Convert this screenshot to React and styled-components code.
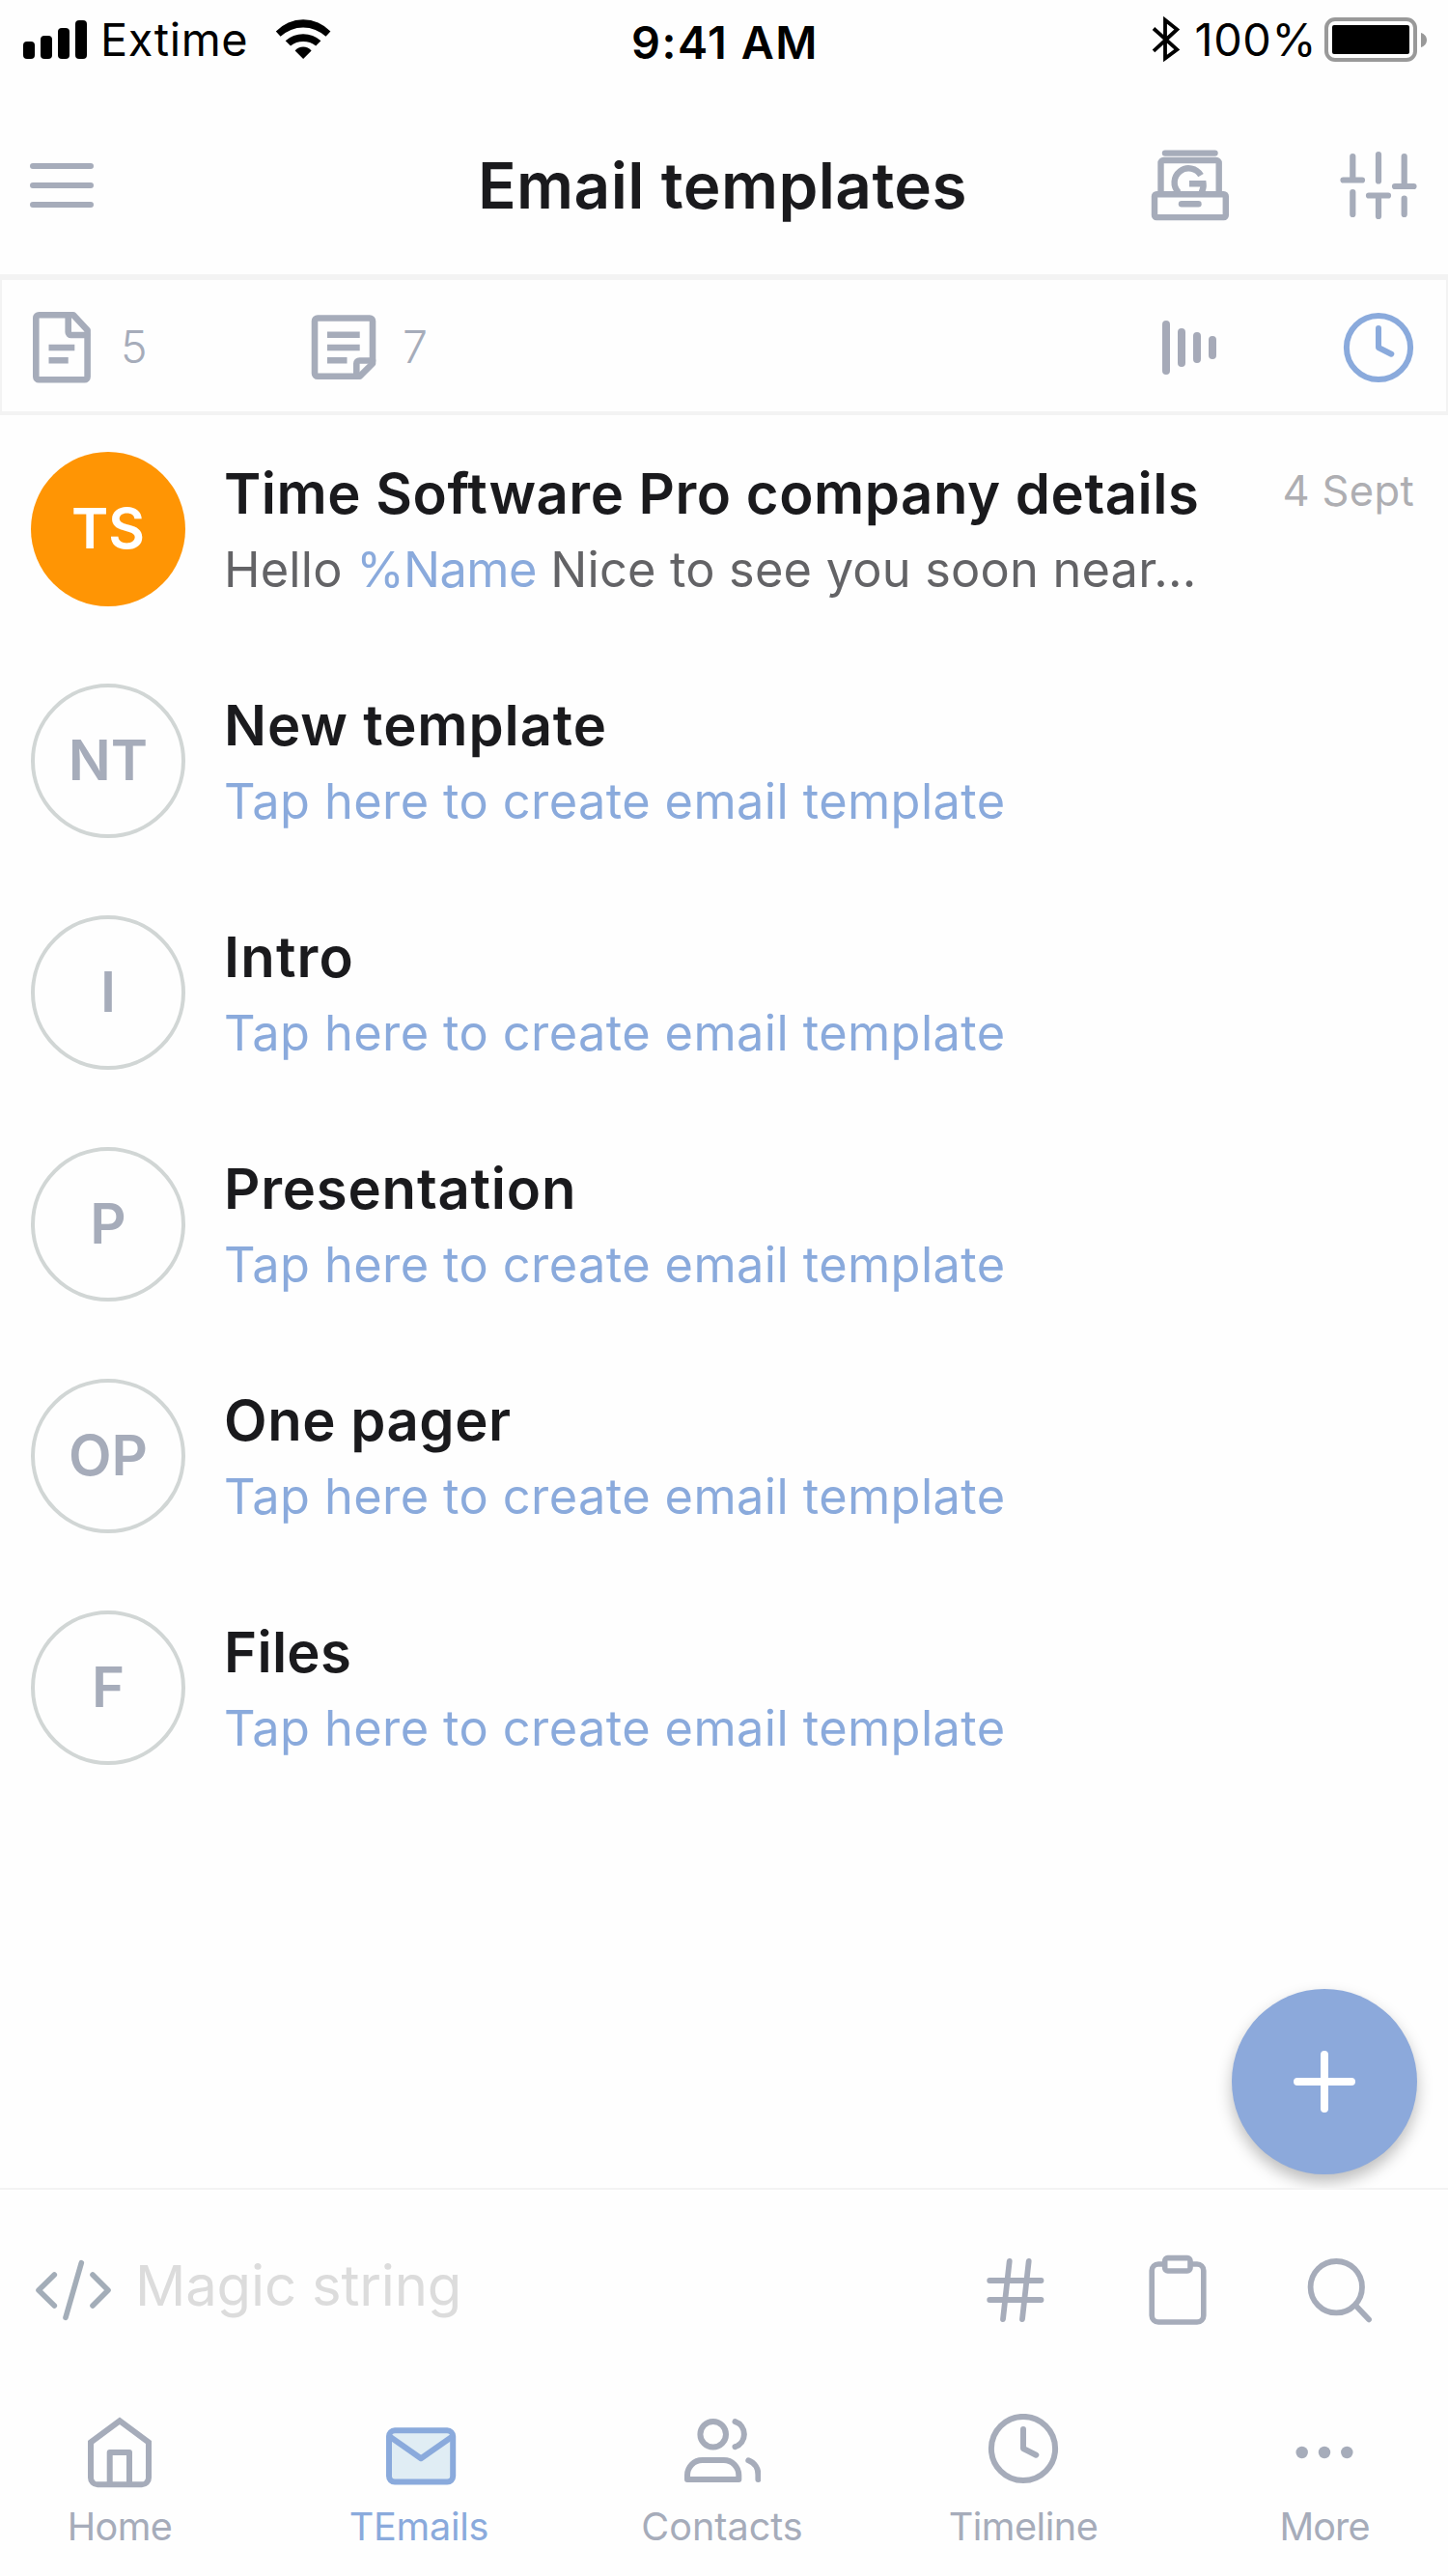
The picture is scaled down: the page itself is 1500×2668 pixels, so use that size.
import React from 'react';
import styled, { createGlobalStyle } from 'styled-components';

const color = {
  page: '#fefefe',
  ink: '#1a1a1d',
  slate: '#a6acba',
  blue: '#8aaadc',
  line: '#f3f3f3',
  body: '#636366',
  date: '#aeaeb2',
  placeholder: '#dcdcdc',
  ring: '#d1d6d5',
  orange: '#ff9504',
};

const GlobalStyle = createGlobalStyle`
  *, *::before, *::after { box-sizing: border-box; }
  body {
    margin: 0;
    background: ${color.page};
    font-family: Inter, "Liberation Sans", sans-serif;
    -webkit-font-smoothing: antialiased;
  }
  svg { display: block; flex: none; }
`;

const Screen = styled.div`
  position: relative;
  display: flex;
  flex-direction: column;
  width: 1500px;
  height: 2668px;
  overflow: hidden;
  background: ${color.page};
`;

/* ---------- Status bar ---------- */

const StatusBar = styled.div`
  display: grid;
  grid-template-columns: 1fr auto 1fr;
  align-items: start;
  height: 100px;
  padding: 0 22px 0 24px;
  color: #000;
  font-size: 46.8px;
  line-height: 82px;
`;

const StatusGroup = styled.div`
  display: flex;
  align-items: center;
  justify-content: ${(p) => (p.$end ? 'flex-end' : 'flex-start')};
  height: 82px;
`;

const Carrier = styled.span`
  margin: 0 28px 0 14px;
  letter-spacing: 0.6px;
`;

const Clock = styled.span`
  padding-top: 3px;
  font-weight: 600;
  letter-spacing: 1.5px;
`;

const Percent = styled.span`
  margin: 0 8px 0 15px;
  letter-spacing: 0.6px;
`;

/* ---------- Header ---------- */

const Header = styled.header`
  display: grid;
  grid-template-columns: 1fr auto 1fr;
  align-items: center;
  height: 188px;
  padding: 0 32px 0 31px;
  border-bottom: 4px solid ${color.line};
`;

const Title = styled.h1`
  margin: -1px 0 0 -2px;
  color: ${color.ink};
  font-size: 65.6px;
  font-weight: 600;
  line-height: 80px;
  letter-spacing: 0.42px;
`;

const HeaderActions = styled.div`
  display: flex;
  align-items: center;
  justify-content: flex-end;
  gap: 114px;
`;

/* ---------- Filter bar ---------- */

const FilterBar = styled.div`
  display: flex;
  align-items: center;
  height: 142px;
  padding: 4px 33px 0 30px;
  border: solid ${color.line};
  border-width: 2px 2px 4px;
`;

const Counter = styled.div`
  display: flex;
  align-items: center;
  width: ${(p) => p.$width}px;
`;

const Count = styled.span`
  margin: -2px 0 0 ${(p) => p.$gap}px;
  color: ${color.slate};
  font-size: 46.5px;
  font-weight: 350;
  line-height: 60px;
`;

const FilterModes = styled.div`
  display: flex;
  align-items: center;
  gap: 131px;
  margin-left: auto;
`;

/* ---------- Template list ---------- */

const List = styled.main`
  display: flex;
  flex: 1;
  flex-direction: column;
  gap: 80px;
  padding: 38px 35px 0 32px;
`;

const TemplateRow = styled.article`
  display: flex;
  height: 160px;
`;

const Avatar = styled.div`
  display: flex;
  flex: none;
  align-items: center;
  justify-content: center;
  width: 160px;
  height: 160px;
  padding-bottom: 2px;
  border: ${(p) => (p.$filled ? 'none' : `4px solid ${color.ring}`)};
  border-radius: 50%;
  background: ${(p) => (p.$filled ? color.orange : 'transparent')};
  color: ${(p) => (p.$filled ? '#fff' : color.slate)};
  font-size: 58px;
  font-weight: 600;
`;

const RowText = styled.div`
  flex: 1;
  min-width: 0;
  padding: 3px 0 0 40px;
  white-space: pre;
`;

const RowTitle = styled.h2`
  margin: 0;
  color: ${color.ink};
  font-size: 58px;
  font-weight: 600;
  line-height: 80px;
  letter-spacing: ${(p) => p.$tracking}px;
`;

const RowSummary = styled.p`
  margin: 0;
  color: ${(p) => (p.$link ? color.blue : color.body)};
  font-size: 50.5px;
  line-height: 77px;
  letter-spacing: ${(p) => (p.$link ? 0.4 : 0.2)}px;
`;

const Token = styled.span`
  color: ${color.blue};
  letter-spacing: -0.6px;
`;

const RowDate = styled.time`
  flex: none;
  color: ${color.date};
  font-size: 43.5px;
  line-height: 80px;
  letter-spacing: 0.35px;
`;

/* ---------- Floating button ---------- */

const AddButton = styled.button`
  position: absolute;
  right: 32px;
  bottom: 416px;
  display: flex;
  align-items: center;
  justify-content: center;
  width: 192px;
  height: 192px;
  padding: 0;
  border: 0;
  border-radius: 50%;
  background: #8ca9db;
  box-shadow: 0 8px 16px rgba(0, 0, 0, 0.26);
`;

/* ---------- Composer ---------- */

const Composer = styled.div`
  position: relative;
  z-index: 1;
  display: flex;
  align-items: center;
  height: 210px;
  padding: 0 79px 0 37px;
  border-top: 2px solid ${color.line};
  background: ${color.page};
`;

const Placeholder = styled.span`
  margin: -10px 0 0 24px;
  color: ${color.placeholder};
  font-size: 58px;
  line-height: 80px;
  letter-spacing: -0.17px;
`;

const ComposerActions = styled.div`
  display: flex;
  align-items: center;
  margin-left: auto;
  gap: 102px;
`;

/* ---------- Tab bar ---------- */

const TabBar = styled.nav`
  display: flex;
  justify-content: space-between;
  height: 192px;
  padding: 24px 28px 0 24px;
`;

const Tab = styled.a`
  display: flex;
  flex-direction: column;
  align-items: center;
  width: 200px;
  color: ${(p) => (p.$active ? color.blue : color.slate)};
`;

const TabLabel = styled.span`
  margin-top: 12px;
  padding-right: ${(p) => (p.$active ? 4 : 0)}px;
  font-size: 39.6px;
  line-height: 50px;
  letter-spacing: ${(p) => p.$tracking}px;
`;

/* ---------- Icons ---------- */

const Icon = ({ box, width = 6, tone = 'currentColor', children }) => {
  const [, , w, h] = box.split(' ');
  return (
    <svg
      width={w}
      height={h}
      viewBox={box}
      fill="none"
      stroke={tone}
      strokeWidth={width}
      strokeLinecap="round"
      strokeLinejoin="round"
    >
      {children}
    </svg>
  );
};

const SignalIcon = () => (
  <svg width="66" height="40" viewBox="0 0 66 40">
    <rect x="0" y="22" width="12" height="18" rx="4" />
    <rect x="18" y="16" width="12" height="24" rx="4" />
    <rect x="36" y="8" width="12" height="32" rx="4" />
    <rect x="54" y="0" width="12" height="40" rx="4" />
  </svg>
);

const WifiIcon = () => (
  <svg width="58" height="42" viewBox="285 19 58 42">
    <path d="M285.8 31.6A38.7 38.7 0 0 1 342.4 31.6L337.5 36.8A34.3 34.3 0 0 0 290.6 36.8Z" />
    <path d="M295.7 41.2A27.4 27.4 0 0 1 332.4 41.2L327.2 46.5A21.8 21.8 0 0 0 301 46.5Z" />
    <path d="M305.6 51.5A11 11 0 0 1 322.6 51.5L314.1 60Z" />
  </svg>
);

const BluetoothIcon = () => (
  <svg width="30" height="48" viewBox="1192 16 30 48" fill="none" stroke="#000" strokeWidth="3.8">
    <path d="M1194 28.5L1218.3 50.3L1206 59.5V19.7L1218.3 29.5L1194 51.8" />
  </svg>
);

const BatteryIcon = () => (
  <svg width="106" height="46" viewBox="0 0 106 46">
    <rect x="2" y="2" width="92" height="42" rx="9" fill="none" stroke="#999" strokeWidth="4" />
    <rect x="8" y="8" width="80" height="30" rx="2" />
    <path d="M100 16C103.500 17 106 20 106 23.500S103.500 30 100 31Z" fill="#999" />
  </svg>
);

const MenuIcon = () => (
  <Icon box="0 0 66 46" tone={color.slate}>
    <path d="M3 3H63M3 23H63M3 43H63" />
  </Icon>
);

const ArchiveIcon = () => (
  <Icon box="1192 155 82 74" tone={color.slate} width={6.4}>
    <path d="M1207 158.600H1258.500" />
    <path d="M1202.500 200V169a3 3 0 0 1 3-3H1259.700a3 3 0 0 1 3 3V200" />
    <rect x="1196" y="201.300" width="73.800" height="23.800" rx="2" />
    <path d="M1224 211.200H1241.500" />
    <path
      d="M1244 181.600A14.700 14.700 0 1 0 1221 199.500M1232 190.200H1246.500C1247 194 1246 197 1244.500 200"
      strokeLinecap="butt"
      strokeLinejoin="miter"
    />
  </Icon>
);

const SlidersIcon = () => (
  <Icon box="1388 156 80 72" tone={color.slate} width={6.2}>
    <path d="M1401.300 162V186.500M1391.500 186.500H1411M1401.300 199V222" />
    <path d="M1428 160V187.500M1418 202.500H1438M1428 202.500V224" />
    <path d="M1454.700 162V193M1445 193H1464.500M1454.700 205.500V222" />
  </Icon>
);

const DocumentIcon = () => (
  <Icon box="32 320 64 80" tone={color.slate} width={6.6}>
    <path d="M76 326.300H40.300a3 3 0 0 0-3 3V390.300a3 3 0 0 0 3 3H87.600a3 3 0 0 0 3-3V342Z" />
    <path d="M70.700 327V344a3 3 0 0 0 3 3H90" />
    <path d="M50.500 360H77.300M50.500 373.300H70.700" strokeLinecap="butt" />
  </Icon>
);

const NoteIcon = () => (
  <Icon box="322 320 68 80" tone={color.slate} width={6.6}>
    <path d="M372.800 389.700H329a3 3 0 0 1-3-3V332.500a3 3 0 0 1 3-3H383a3 3 0 0 1 3 3V376.500Z" />
    <path d="M369.300 389V376.500a3 3 0 0 1 3-3H386" />
    <path d="M339 346.700H372.700M339 360H372.700M339 373.300H359.500" strokeLinecap="butt" />
  </Icon>
);

const BarsIcon = () => (
  <Icon box="0 0 56 58" tone="#a6aab8" width={8}>
    <path d="M4 5V53M20 13V45M36 17V41M52 21V37" />
  </Icon>
);

const ClockShape = ({ cx, cy }) => (
  <>
    <circle cx={cx} cy={cy} r="33.100" />
    <path d={`M${cx} ${cy - 20}V${cy}L${cx + 13.3} ${cy + 6.7}`} />
  </>
);

const RecentIcon = () => (
  <Icon box="0 0 74 74" tone={color.blue}>
    <ClockShape cx={37} cy={37} />
  </Icon>
);

const PlusIcon = () => (
  <Icon box="0 0 64 64" tone="#fff" width={8}>
    <path d="M32 4V60M4 32H60" />
  </Icon>
);

const CodeIcon = () => (
  <Icon box="37 2340 79 64" tone="#a3adb8" width={5.6}>
    <path d="M56.300 2356L40 2372L56.300 2388M96 2356L112 2372L96 2388M84.300 2343.700L68 2400.300" />
  </Icon>
);

const HashIcon = () => (
  <Icon box="1022 2338 62 68" tone={color.slate} width={5.8}>
    <path d="M1025.200 2362H1078.500M1025.200 2382H1078.500M1045.700 2342L1039 2402M1065.700 2342L1059 2402" />
  </Icon>
);

const ClipboardIcon = () => (
  <Icon box="1186 2334 66 76" tone={color.slate} width={5.6}>
    <path d="M1205 2345H1200a6.800 6.800 0 0 0-6.800 6.800V2398.200a6.800 6.800 0 0 0 6.800 6.800H1240a6.800 6.800 0 0 0 6.800-6.800V2351.800a6.800 6.800 0 0 0-6.800-6.800H1234" />
    <rect x="1206.700" y="2338.600" width="26.300" height="13.400" rx="3" />
  </Icon>
);

const SearchIcon = () => (
  <Icon box="1354 2338 67 68" tone={color.slate} width={5.8}>
    <circle cx="1384.300" cy="2368.700" r="26.700" />
    <path d="M1404.500 2388L1418 2402.300" />
  </Icon>
);

const HomeIcon = () => (
  <Icon box="84 2500 80 80">
    <path d="M94 2529.500L124 2507.300L154 2529.500V2566.300a7 7 0 0 1-7 7H101a7 7 0 0 1-7-7Z" strokeLinejoin="miter" />
    <path d="M113.700 2573V2540H134V2573" />
  </Icon>
);

const MailIcon = () => (
  <Icon box="396 2500 80 80">
    <rect x="403" y="2517.300" width="66.200" height="53.300" rx="6" fill="#e0edf4" />
    <path d="M404.300 2524L436.100 2546.200L467.900 2524" />
  </Icon>
);

const ContactsIcon = () => (
  <Icon box="708 2500 80 80">
    <circle cx="738.700" cy="2521.200" r="13.300" />
    <path d="M761.500 2508.200A13.700 13.700 0 0 1 761.500 2534.200" />
    <path d="M712 2568V2563.500A15.500 15.500 0 0 1 727.500 2548H749.800A15.500 15.500 0 0 1 765.300 2563.500V2568Z" />
    <path d="M775.300 2548.300C781.800 2550.800 785.400 2556.500 785.400 2563V2568" />
  </Icon>
);

const TimelineIcon = () => (
  <Icon box="1020 2500 80 80">
    <ClockShape cx={1060} cy={2536} />
  </Icon>
);

const MoreIcon = () => (
  <svg width="80" height="80" viewBox="0 0 80 80" fill="currentColor">
    <circle cx="16.700" cy="40" r="6.200" />
    <circle cx="40" cy="40" r="6.200" />
    <circle cx="63.300" cy="40" r="6.200" />
  </svg>
);

/* ---------- Content ---------- */

const placeholderText = 'Tap here to create email template';

const templates = [
  { initials: 'NT', title: 'New template', tracking: 0.9 },
  { initials: 'I', title: 'Intro', tracking: 1.2 },
  { initials: 'P', title: 'Presentation', tracking: 0.8 },
  { initials: 'OP', title: 'One pager', tracking: 0.55 },
  { initials: 'F', title: 'Files', tracking: 0.3 },
];

const tabs = [
  { label: 'Home', icon: HomeIcon, tracking: -0.6 },
  { label: 'TEmails', icon: MailIcon, tracking: -0.28, active: true },
  { label: 'Contacts', icon: ContactsIcon, tracking: 0 },
  { label: 'Timeline', icon: TimelineIcon, tracking: -0.5 },
  { label: 'More', icon: MoreIcon, tracking: -0.9 },
];

export default function App() {
  return (
    <>
      <GlobalStyle />
      <Screen>
        <StatusBar>
          <StatusGroup>
            <SignalIcon />
            <Carrier>Extime</Carrier>
            <WifiIcon />
          </StatusGroup>
          <Clock>9:41 AM</Clock>
          <StatusGroup $end>
            <BluetoothIcon />
            <Percent>100%</Percent>
            <BatteryIcon />
          </StatusGroup>
        </StatusBar>

        <Header>
          <MenuIcon />
          <Title>Email templates</Title>
          <HeaderActions>
            <ArchiveIcon />
            <SlidersIcon />
          </HeaderActions>
        </Header>

        <FilterBar>
          <Counter $width={290}>
            <DocumentIcon />
            <Count $gap={29}>5</Count>
          </Counter>
          <Counter $width={200}>
            <NoteIcon />
            <Count $gap={27}>7</Count>
          </Counter>
          <FilterModes>
            <BarsIcon />
            <RecentIcon />
          </FilterModes>
        </FilterBar>

        <List>
          <TemplateRow>
            <Avatar $filled>TS</Avatar>
            <RowText>
              <RowTitle $tracking={0.54}>Time Software Pro company details</RowTitle>
              <RowSummary>
                Hello <Token>%Name</Token> Nice to see you soon near...
              </RowSummary>
            </RowText>
            <RowDate>4 Sept</RowDate>
          </TemplateRow>
          {templates.map((t) => (
            <TemplateRow key={t.title}>
              <Avatar>{t.initials}</Avatar>
              <RowText>
                <RowTitle $tracking={t.tracking}>{t.title}</RowTitle>
                <RowSummary $link>{placeholderText}</RowSummary>
              </RowText>
            </TemplateRow>
          ))}
        </List>

        <Composer>
          <CodeIcon />
          <Placeholder>Magic string</Placeholder>
          <ComposerActions>
            <HashIcon />
            <ClipboardIcon />
            <SearchIcon />
          </ComposerActions>
        </Composer>

        <TabBar>
          {tabs.map(({ label, icon: TabIcon, tracking, active }) => (
            <Tab key={label} $active={active}>
              <TabIcon />
              <TabLabel $active={active} $tracking={tracking}>{label}</TabLabel>
            </Tab>
          ))}
        </TabBar>

        <AddButton aria-label="Add template">
          <PlusIcon />
        </AddButton>
      </Screen>
    </>
  );
}
